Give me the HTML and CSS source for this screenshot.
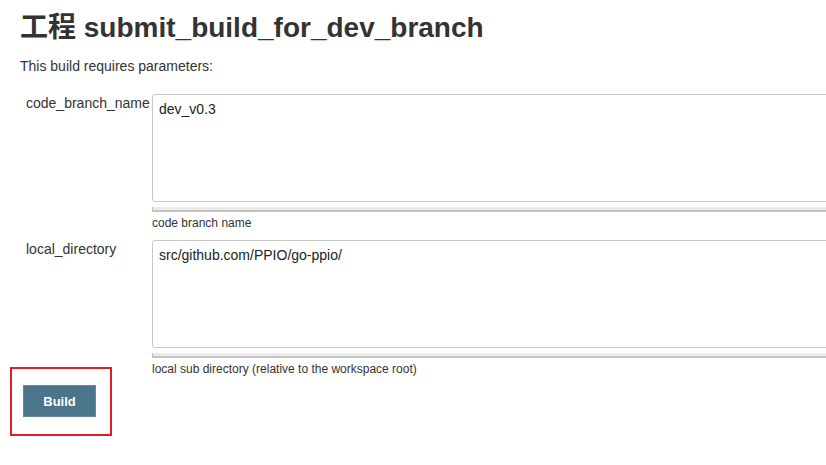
FILE: index.html
```html
<!DOCTYPE html>
<html>
<head>
<meta charset="utf-8">
<link rel="stylesheet" href="styles.css">
</head>
<body>
<div class="page">
  <h1 class="title">工程 submit_build_for_dev_branch</h1>
  <p class="intro">This build requires parameters:</p>
  <div class="params">
    <div class="row">
      <div class="label">code_branch_name</div>
      <div class="field">
        <textarea class="ta">dev_v0.3</textarea>
        <div class="handle"></div>
        <div class="help">code branch name</div>
      </div>
    </div>
    <div class="row">
      <div class="label">local_directory</div>
      <div class="field">
        <textarea class="ta">src/github.com/PPIO/go-ppio/</textarea>
        <div class="handle"></div>
        <div class="help">local sub directory (relative to the workspace root)</div>
      </div>
    </div>
  </div>
  <div class="highlight">
    <button class="build">Build</button>
  </div>
</div>
</body>
</html>
```
FILE: styles.css
```css
html, body {
  margin: 0;
  padding: 0;
  background: #fff;
  overflow: hidden;
}
body {
  font-family: "Liberation Sans", Arial, "Noto Sans CJK SC", sans-serif;
  color: #333;
  width: 826px;
  height: 465px;
}
.page {
  padding: 0 0 0 20px;
}
.title {
  margin: 0;
  padding-top: 11px;
  font-size: 28px;
  line-height: 34px;
  font-weight: bold;
  color: #333;
}
.intro {
  margin: 13px 0 0 0;
  font-size: 14px;
  line-height: 16px;
}
.params {
  margin-top: 20px;
  display: flex;
  flex-direction: column;
  gap: 10px;
}
.row {
  display: flex;
}
.label {
  width: 126px;
  padding-left: 6px;
  font-size: 14px;
  line-height: 17px;
  padding-top: 1px;
  flex: none;
}
.field {
  display: flex;
  flex-direction: column;
  width: 700px;
  flex: none;
}
.ta {
  display: block;
  box-sizing: border-box;
  width: 700px;
  height: 108px;
  margin: 0;
  resize: none;
  border: 1px solid #c8c8c8;
  border-radius: 3px;
  padding: 6px 6px;
  font-family: "Liberation Sans", Arial, sans-serif;
  font-size: 14px;
  line-height: 17px;
  color: #222;
  outline: none;
}
.handle {
  margin-top: 5px;
  height: 3px;
  background: #ebebeb;
  border-left: 1px solid #bbb;
  border-bottom: 2px solid #c4c4c4;
}
.help {
  margin-top: 4px;
  font-size: 12px;
  line-height: 14px;
  color: #333;
}
.highlight {
  margin-top: -9px;
  margin-left: -10px;
  width: 98px;
  height: 65px;
  border: 2px solid #e21d24;
  box-sizing: content-box;
  display: flex;
  align-items: flex-start;
  padding: 0;
}
.build {
  margin: 16px 0 0 11px;
  width: 73px;
  height: 32px;
  background: #4b758b;
  border: 1px solid #5d8aa0;
  color: #fff;
  font-family: "Liberation Sans", Arial, sans-serif;
  font-weight: bold;
  font-size: 13px;
  padding: 0;
  border-radius: 0;
}
```
